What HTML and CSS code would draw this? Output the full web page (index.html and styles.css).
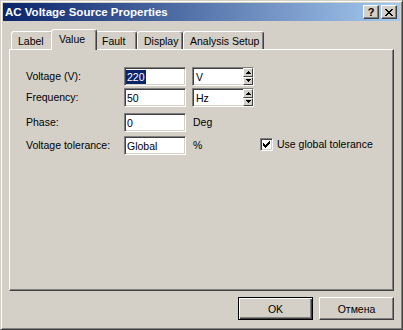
FILE: index.html
```html
<!DOCTYPE html>
<html lang="en">
<head>
  <meta charset="UTF-8">
  <title>AC Voltage Source Properties</title>
  <link rel="stylesheet" href="styles.css">
</head>
<body>

<div class="window">
  <!-- title bar -->
  <div class="titlebar">
    <span class="title">AC Voltage Source Properties</span>
    <div class="caption-buttons">
      <button class="cap-btn help">?</button>
      <button class="cap-btn">
        <svg width="8" height="7" viewBox="0 0 8 7" shape-rendering="crispEdges">
          <path d="M0 0h2v1h-2z M6 0h2v1h-2z M1 1h2v1h-2z M5 1h2v1h-2z M2 2h4v1h-4z M3 3h2v1h-2z M2 4h4v1h-4z M1 5h2v1h-2z M5 5h2v1h-2z M0 6h2v1h-2z M6 6h2v1h-2z" fill="#000"/>
        </svg>
      </button>
    </div>
  </div>

  <div class="content">
    <!-- tabs -->
    <div class="tabs">
      <div class="tab tab-label">Label</div>
      <div class="tab tab-value active">Value</div>
      <div class="tab tab-fault">Fault</div>
      <div class="tab tab-display">Display</div>
      <div class="tab tab-analysis">Analysis Setup</div>
    </div>

    <div class="panel">
      <div class="form">
        <div class="label">Voltage (V):</div>
        <div class="field"><span class="selected">220</span></div>
        <div class="field combo">
          <span class="combo-text">V</span>
          <div class="spin">
            <div class="spin-btn"><svg width="5" height="3" viewBox="0 0 5 3" shape-rendering="crispEdges"><path d="M2 0h1v1h-1z M1 1h3v1h-3z M0 2h5v1h-5z" fill="#000"/></svg></div>
            <div class="spin-btn"><svg width="5" height="3" viewBox="0 0 5 3" shape-rendering="crispEdges"><path d="M0 0h5v1h-5z M1 1h3v1h-3z M2 2h1v1h-1z" fill="#000"/></svg></div>
          </div>
        </div>
        <div></div>

        <div class="label">Frequency:</div>
        <div class="field">50</div>
        <div class="field combo">
          <span class="combo-text">Hz</span>
          <div class="spin">
            <div class="spin-btn"><svg width="5" height="3" viewBox="0 0 5 3" shape-rendering="crispEdges"><path d="M2 0h1v1h-1z M1 1h3v1h-3z M0 2h5v1h-5z" fill="#000"/></svg></div>
            <div class="spin-btn"><svg width="5" height="3" viewBox="0 0 5 3" shape-rendering="crispEdges"><path d="M0 0h5v1h-5z M1 1h3v1h-3z M2 2h1v1h-1z" fill="#000"/></svg></div>
          </div>
        </div>
        <div></div>

        <div class="label">Phase:</div>
        <div class="field">0</div>
        <div class="unit">Deg</div>
        <div></div>

        <div class="label">Voltage tolerance:</div>
        <div class="field">Global</div>
        <div class="unit">%</div>
        <div class="check-row">
          <span class="checkbox">
            <svg width="7" height="7" viewBox="0 0 7 7" shape-rendering="crispEdges">
              <path d="M6 0h1v1h-1z M5 1h2v1h-2z M0 2h1v1h-1z M4 2h3v1h-3z M0 3h2v1h-2z M3 3h3v1h-3z M0 4h5v1h-5z M1 5h3v1h-3z M2 6h1v1h-1z" fill="#000"/>
            </svg>
          </span>
          <span>Use global tolerance</span>
        </div>
      </div>
    </div>

    <!-- dialog buttons -->
    <div class="actions">
      <button class="btn default">OK</button>
      <button class="btn">Отмена</button>
    </div>
  </div>
</div>

</body>
</html>
```

FILE: styles.css
```css
/* general */
body {
  margin: 0;
  font-family: "Liberation Sans", Arial, sans-serif;
  font-size: 10.5px;
  color: #000;
  background: #d4d0c8;
}

.window {
  width: 403px;
  height: 330px;
  box-sizing: border-box;
  background: #d4d0c8;
  border: 1px solid;
  border-color: #d4d0c8 #404040 #404040 #d4d0c8;
  box-shadow: inset 1px 1px #fff, inset -1px -1px #808080;
  padding: 2px;
  display: flex;
  flex-direction: column;
}

/* title bar */
.titlebar {
  height: 18px;
  display: flex;
  align-items: center;
  justify-content: space-between;
  padding: 0 3px 0 2px;
  background: linear-gradient(to right, #0a246a, #a6caf0);
}
.title {
  color: #fff;
  font-weight: bold;
  font-size: 11.5px;
}
.caption-buttons {
  display: flex;
  gap: 2px;
}
.cap-btn {
  width: 16px;
  height: 14px;
  box-sizing: border-box;
  padding: 0;
  margin: 0;
  background: #d4d0c8;
  border: 1px solid;
  border-color: #fff #404040 #404040 #fff;
  box-shadow: inset -1px -1px #808080;
  display: flex;
  align-items: center;
  justify-content: center;
  font-family: "Liberation Sans", Arial, sans-serif;
}
.cap-btn.help {
  font-size: 11px;
  font-weight: bold;
  line-height: 12px;
}

.content {
  flex: 1;
  padding: 8px 6px 0;
  display: flex;
  flex-direction: column;
}

/* tabs */
.tabs {
  display: flex;
  align-items: flex-end;
  height: 20px;
  padding-left: 2px;
}
.tab {
  height: 18px;
  box-sizing: border-box;
  border: 1px solid;
  border-bottom: none;
  border-color: #fff #404040 transparent #fff;
  border-radius: 3px 3px 0 0;
  box-shadow: inset -1px 0 #808080;
  background: #d4d0c8;
  padding-left: 6px;
  display: flex;
  align-items: center;
}
.tab-label { width: 42px; }
.tab-value { width: 46px; }
.tab-fault { width: 42px; }
.tab-display { width: 46px; }
.tab-analysis { width: 81px; }
.tab.active {
  height: 21px;
  margin: 0 -2px -1px;
  padding-left: 7px;
  padding-bottom: 3px;
  position: relative;
  z-index: 1;
}

.panel {
  height: 242px;
  box-sizing: border-box;
  border: 1px solid;
  border-color: #fff #404040 #404040 #fff;
  box-shadow: inset -1px -1px #808080;
  padding: 17px 0 0 16px;
}

/* form */
.form {
  display: grid;
  grid-template-columns: 92px 62px 62px auto;
  grid-template-rows: 21px 25px 23px 19px;
  column-gap: 6px;
  align-items: start;
}
.label, .unit {
  line-height: 19px;
  height: 19px;
}
.unit {
  padding-left: 1px;
}
.field {
  height: 19px;
  box-sizing: border-box;
  border: 1px solid;
  border-color: #808080 #fff #fff #808080;
  box-shadow: inset 1px 1px #404040, inset -1px -1px #d4d0c8;
  background: #fff;
  padding-left: 2px;
  display: flex;
  align-items: center;
  white-space: nowrap;
}
.selected {
  background: #0a246a;
  color: #fff;
  line-height: 14px;
  padding: 0 1px;
  margin-left: -1px;
}
.combo {
  padding-left: 3px;
  align-items: stretch;
}
.combo-text {
  flex: 1;
  display: flex;
  align-items: center;
}
.spin {
  width: 10px;
  display: flex;
  flex-direction: column;
}
.spin-btn {
  flex: 1;
  box-sizing: border-box;
  background: #d4d0c8;
  border: 1px solid;
  border-color: #fff #404040 #404040 #fff;
  display: flex;
  align-items: center;
  justify-content: center;
}

.check-row {
  margin-top: 2px;
  display: flex;
  align-items: center;
  gap: 4px;
  line-height: 13px;
  white-space: nowrap;
}
.checkbox {
  width: 13px;
  height: 13px;
  box-sizing: border-box;
  border: 1px solid;
  border-color: #808080 #fff #fff #808080;
  box-shadow: inset 1px 1px #404040, inset -1px -1px #d4d0c8;
  background: #fff;
  display: flex;
  align-items: center;
  justify-content: center;
}

/* dialog buttons */
.actions {
  margin-top: 6px;
  display: flex;
  justify-content: flex-end;
  gap: 6px;
}
.btn {
  width: 75px;
  height: 23px;
  box-sizing: border-box;
  margin: 0;
  padding: 0;
  font-family: "Liberation Sans", Arial, sans-serif;
  font-size: 10.5px;
  color: #000;
  background: #d4d0c8;
  border: 1px solid;
  border-color: #fff #404040 #404040 #fff;
  box-shadow: inset -1px -1px #808080;
}
.btn.default {
  border-color: #000;
  box-shadow: inset 1px 1px #fff, inset -1px -1px #404040, inset -2px -2px #808080;
}
```
